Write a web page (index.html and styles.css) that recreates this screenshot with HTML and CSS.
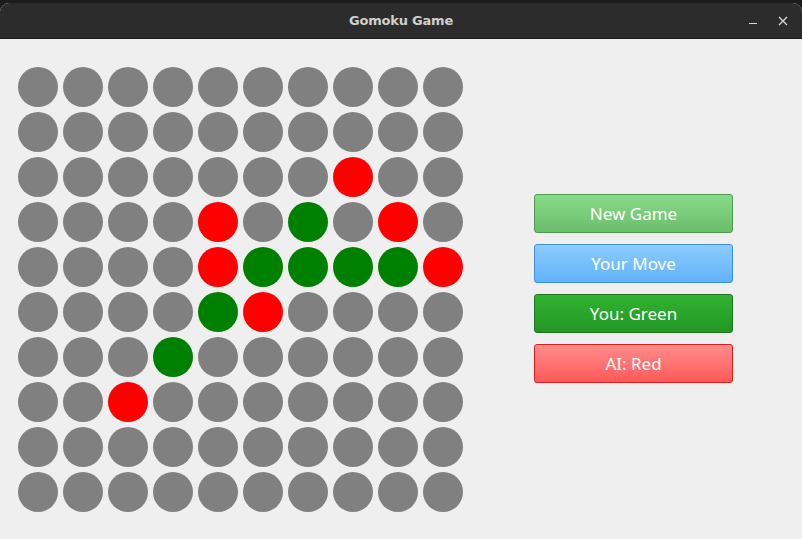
FILE: index.html
```html
<!DOCTYPE html>
<html>
<head>
<meta charset="utf-8">
<link rel="stylesheet" href="styles.css">
</head>
<body>
<div class="desk">
  <div class="window">
    <div class="titlebar">
      <span class="title">Gomoku Game</span>
      <div class="controls">
        <span class="ctl min"></span>
        <span class="ctl close">
          <svg width="10" height="10" viewBox="0 0 10 10"><path d="M1 1L9 9M9 1L1 9" stroke="#d6d6d6" stroke-width="1.4"/></svg>
        </span>
      </div>
    </div>
    <div class="content">
      <div class="board" id="board"></div>
      <div class="panel">
        <div class="btn b-new">New Game</div>
        <div class="btn b-move">Your Move</div>
        <div class="btn b-you">You: Green</div>
        <div class="btn b-ai">AI: Red</div>
      </div>
    </div>
  </div>
</div>
<script src="app.js"></script>
</body>
</html>
```
FILE: styles.css
```css
html, body {
  margin: 0;
  padding: 0;
  width: 802px;
  height: 539px;
  overflow: hidden;
  background: #1c1c1c;
}
.desk {
  padding-top: 3px;
  height: 536px;
}
.window {
  height: 536px;
  border-radius: 9px 9px 0 0;
  overflow: hidden;
  display: flex;
  flex-direction: column;
  background: #efefef;
}
.titlebar {
  height: 35px;
  flex: none;
  background: #2c2c2c;
  border-bottom: 1px solid #1b1b1b;
  position: relative;
  display: flex;
  align-items: center;
  justify-content: center;
}
.title {
  font-family: "DejaVu Sans", sans-serif;
  font-weight: bold;
  font-size: 13px;
  color: #cfcfcf;
  letter-spacing: -0.2px;
}
.controls {
  position: absolute;
  right: 14px;
  top: 0;
  height: 35px;
  display: flex;
  align-items: center;
  gap: 20px;
}
.ctl {
  width: 10px;
  height: 10px;
  display: flex;
  align-items: center;
  justify-content: center;
}
.min::after {
  content: "";
  display: block;
  width: 8px;
  height: 1px;
  background: #d6d6d6;
  margin-top: 6px;
}
.content {
  flex: 1;
  display: flex;
  align-items: center;
  padding-left: 18px;
}
.board {
  display: grid;
  grid-template-columns: repeat(10, 40px);
  grid-auto-rows: 40px;
  gap: 5px;
}
.cell {
  width: 40px;
  height: 40px;
  border-radius: 50%;
  background: #808080;
}
.cell.r { background: #ff0000; }
.cell.g { background: #008000; }
.panel {
  margin-left: 71px;
  margin-bottom: 1px;
  display: flex;
  flex-direction: column;
  gap: 11px;
}
.btn {
  width: 197px;
  height: 37px;
  border: 1px solid;
  border-radius: 3px;
  display: flex;
  align-items: center;
  justify-content: center;
  font-family: "Noto Sans", sans-serif;
  font-size: 17px;
  color: #ffffff;
}
.b-new {
  background: linear-gradient(#87dc87, #6cbd6c);
  border-color: #4f9a4f;
}
.b-move {
  background: linear-gradient(#8dcbff, #60b3fa);
  border-color: #3f8fdc;
}
.b-you {
  background: linear-gradient(#32b232, #229722);
  border-color: #1d761d;
}
.b-ai {
  background: linear-gradient(#ff8c8c, #ff5959);
  border-color: #df1c1c;
}
```
FILE: app.js
```js
var rows = [
  "..........",
  "..........",
  ".......R..",
  "....R.G.R.",
  "....RGGGGR",
  "....GR....",
  "...G......",
  "..R.......",
  "..........",
  ".........."
];
var board = document.getElementById("board");
rows.forEach(function (row) {
  for (var i = 0; i < row.length; i++) {
    var d = document.createElement("div");
    d.className = "cell" + (row[i] === "R" ? " r" : row[i] === "G" ? " g" : "");
    board.appendChild(d);
  }
});
```
